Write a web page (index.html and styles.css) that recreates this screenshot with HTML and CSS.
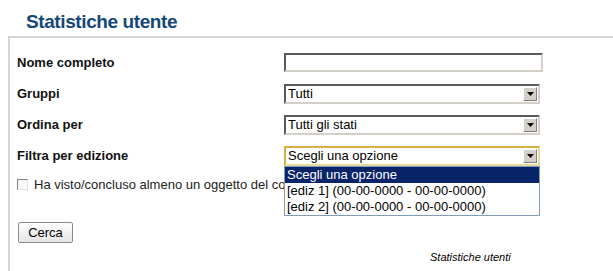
FILE: index.html
```html
<!DOCTYPE html>
<html>

<head>
    <meta charset="utf-8">
    <title>Statistiche utente</title>
    <link rel="stylesheet" href="styles.css">
</head>

<body>
    <div id="title">Statistiche utente</div>

    <div class="panel">
        <div class="form">
            <div class="row">
                <label class="lbl">Nome completo</label>
                <div class="text-input"></div>
            </div>
            <div class="row">
                <label class="lbl">Gruppi</label>
                <div class="select">
                    <span class="value">Tutti</span>
                    <span class="arrow"><svg width="7" height="4" viewBox="0 0 7 4"><path d="M0 0h7L3.5 4z" fill="#000"/></svg></span>
                </div>
            </div>
            <div class="row">
                <label class="lbl">Ordina per</label>
                <div class="select">
                    <span class="value">Tutti gli stati</span>
                    <span class="arrow"><svg width="7" height="4" viewBox="0 0 7 4"><path d="M0 0h7L3.5 4z" fill="#000"/></svg></span>
                </div>
            </div>
            <div class="row">
                <label class="lbl">Filtra per edizione</label>
                <div class="select focused">
                    <span class="value">Scegli una opzione</span>
                    <span class="arrow"><svg width="7" height="4" viewBox="0 0 7 4"><path d="M0 0h7L3.5 4z" fill="#000"/></svg></span>
                    <ul class="options">
                        <li class="selected">Scegli una opzione</li>
                        <li>[ediz 1] (00-00-0000 - 00-00-0000)</li>
                        <li>[ediz 2] (00-00-0000 - 00-00-0000)</li>
                    </ul>
                </div>
            </div>
            <div class="check">
                <span class="box"></span>
                Ha visto/concluso almeno un oggetto del corso
            </div>
            <div class="actions">
                <button>Cerca</button>
            </div>
        </div>
        <div class="footer">Statistiche utenti</div>
    </div>
</body>

</html>
```

FILE: styles.css
```css
body {
    margin: 0;
    background-color: #FFFFFF;
    font-family: 'Liberation Sans', Arial, sans-serif;
    font-size: 13px;
    color: #000000;
    overflow: hidden;
}

div#title {
    padding: 11px 0 0 26px;
    height: 25px;
    font-size: 19px;
    line-height: 22px;
    letter-spacing: -0.4px;
    font-weight: bold;
    color: #15477A;
}

.panel {
    margin-left: 8px;
    border-top: 2px solid #D6D6D6;
    border-left: 2px solid #D6D6D6;
    height: 240px;
}

.form {
    padding: 9px 0 0 7px;
}

.row {
    display: flex;
    align-items: center;
    height: 31px;
}

.lbl {
    width: 267px;
    font-weight: bold;
    color: #111111;
}

.text-input {
    width: 255px;
    height: 15px;
    border: 2px solid;
    border-color: #5A5A5A #D4D0C8 #D4D0C8 #5A5A5A;
    background-color: #FFFFFF;
}

.select {
    position: relative;
    display: flex;
    align-items: center;
    width: 252px;
    height: 16px;
    border: 2px solid;
    border-color: #5A5A5A #D4D0C8 #D4D0C8 #5A5A5A;
    background-color: #FFFFFF;
}

.select.focused {
    border: 2px solid #D8B040;
    border-right-color: #E8D8A0;
    border-bottom-color: #E8D8A0;
}

.value {
    flex: 1;
    padding-left: 2px;
    line-height: 16px;
}

.arrow {
    width: 14px;
    height: 14px;
    margin-right: 1px;
    display: flex;
    align-items: center;
    justify-content: center;
    background-color: #D4D0C8;
    border: 1px solid;
    border-color: #FFFFFF #808080 #808080 #FFFFFF;
    box-sizing: border-box;
}

.options {
    position: absolute;
    top: 18px;
    left: -2px;
    width: 254px;
    margin: 0;
    padding: 0;
    list-style: none;
    border: 1px solid #7F9DB9;
    background-color: #FFFFFF;
}

.options li {
    height: 16px;
    line-height: 16px;
    padding-left: 2px;
}

.options li.selected {
    background-color: #0A246A;
    color: #FFFFFF;
}

.check {
    display: flex;
    align-items: center;
    gap: 6px;
    height: 30px;
    margin-top: -2px;
    color: #222222;
    white-space: nowrap;
}

.box {
    width: 9px;
    height: 9px;
    border: 1px solid;
    border-color: #808080 #E0E0E0 #E0E0E0 #808080;
    background-color: #FAFAFA;
}

.actions {
    padding-top: 23px;
}

button {
    font-family: 'Liberation Sans', Arial, sans-serif;
    font-size: 13px;
    width: 55px;
    height: 21px;
    margin-left: 1px;
    padding: 0;
    background: linear-gradient(#FFFFFF, #E4E4E4);
    border: 1px solid #8A8A8A;
    border-radius: 2px;
    color: #000000;
}

.footer {
    margin-top: 8px;
    padding-left: 420px;
    font-size: 11px;
    font-style: italic;
}
```
